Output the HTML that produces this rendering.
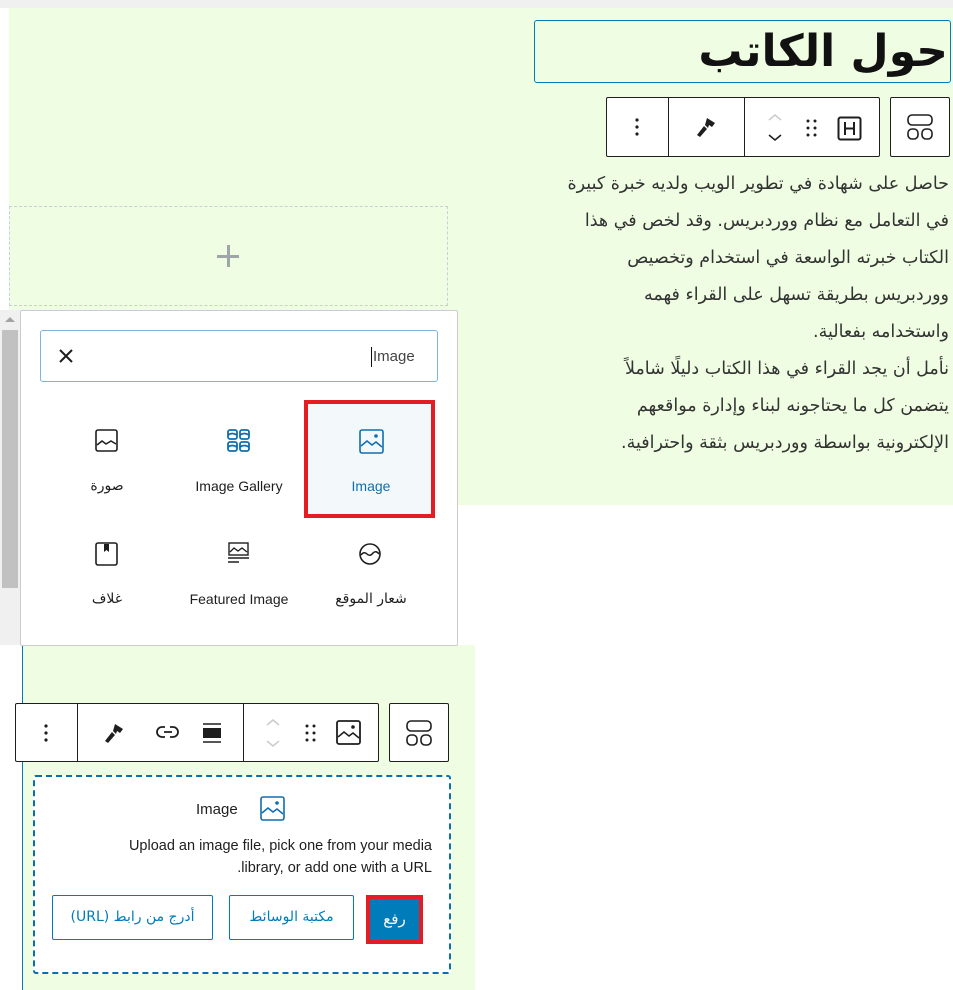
<!DOCTYPE html>
<html><head><meta charset="utf-8"><style>
*{box-sizing:border-box;margin:0;padding:0}
body{width:953px;height:990px;position:relative;background:#fff;font-family:"Liberation Sans","Noto Sans CJK SC",sans-serif;overflow:hidden}
.a{position:absolute}
.g{background:#effde3}
.tb{position:absolute;border:1px solid #1e1e1e;border-radius:2px;background:#fff}
.sep{position:absolute;top:0;bottom:0;width:1px;background:#1e1e1e}
.ar{font-family:"DejaVu Sans","Liberation Sans",sans-serif;direction:rtl}
svg{position:absolute}
.lbl{position:absolute;font-size:14px;color:#1e1e1e;text-align:center;width:130px}
.btn{position:absolute;border:1px solid #007cba;border-radius:2px;color:#007cba;font-size:14px;text-align:center;line-height:42px;background:#fff;direction:rtl;font-family:"DejaVu Sans",sans-serif}
.p div{white-space:nowrap;height:37px}
</style></head><body>
<div class="a" style="left:0;top:0;width:953px;height:8px;background:#f0f0f0"></div>
<div class="a g" style="left:9px;top:8px;width:944px;height:302px"></div>
<div class="a g" style="left:458px;top:300px;width:495px;height:205px"></div>
<div class="a g" style="left:22px;top:645px;width:453px;height:345px"></div>
<div class="a" style="left:22px;top:645px;width:1px;height:345px;background:#007cba"></div>

<div class="a" style="left:534px;top:20px;width:417px;height:63px;border:1px solid #007cba;border-radius:3px"></div>
<div class="a ar" style="left:540px;top:22px;width:408px;height:60px;font-size:44px;font-weight:bold;text-align:right;line-height:60px;color:#111">حول الكاتب</div>

<div class="a ar p" style="left:500px;top:166px;width:449px;font-size:17.5px;line-height:37px;color:#333;text-align:right">
<div>حاصل على شهادة في تطوير الويب ولديه خبرة كبيرة</div>
<div>في التعامل مع نظام ووردبريس. وقد لخص في هذا</div>
<div>الكتاب خبرته الواسعة في استخدام وتخصيص</div>
<div>ووردبريس بطريقة تسهل على القراء فهمه</div>
<div>واستخدامه بفعالية.</div>
<div>نأمل أن يجد القراء في هذا الكتاب دليلًا شاملاً</div>
<div>يتضمن كل ما يحتاجونه لبناء وإدارة مواقعهم</div>
<div>الإلكترونية بواسطة ووردبريس بثقة واحترافية.</div>
</div>

<!-- top toolbar -->
<div class="tb" style="left:606px;top:97px;width:274px;height:60px">
 <div class="sep" style="left:61px"></div><div class="sep" style="left:137px"></div>
 <svg style="left:26px;top:18px" width="8" height="22"><circle cx="4" cy="4" r="1.6" fill="#1e1e1e"/><circle cx="4" cy="11" r="1.6" fill="#1e1e1e"/><circle cx="4" cy="18" r="1.6" fill="#1e1e1e"/></svg>
 <svg style="left:87px;top:17px" width="24" height="24" viewBox="0 0 24 24"><path d="M13 3 L21 8 L18 12 L15 10 L14 13 L11 10 Z M10 11 L13 14 L6 22 L3 20 Z" fill="#1e1e1e"/></svg>
 <svg style="left:158px;top:14px" width="20" height="32"><path d="M4 8 L10 3 L16 8" stroke="#ccc" stroke-width="1.5" fill="none"/><path d="M4 23 L10 28 L16 23" stroke="#1e1e1e" stroke-width="1.5" fill="none"/></svg>
 <svg style="left:198px;top:20px" width="14" height="20"><g fill="#1e1e1e"><circle cx="3" cy="3" r="1.5"/><circle cx="10" cy="3" r="1.5"/><circle cx="3" cy="10" r="1.5"/><circle cx="10" cy="10" r="1.5"/><circle cx="3" cy="17" r="1.5"/><circle cx="10" cy="17" r="1.5"/></g></svg>
 <svg style="left:230px;top:18px" width="26" height="26"><rect x="1.5" y="1.5" width="22" height="22" rx="2" stroke="#1e1e1e" stroke-width="2" fill="none"/><path d="M8 6 V19 M17 6 V19 M8 12.5 H17" stroke="#1e1e1e" stroke-width="2"/></svg>
</div>
<div class="tb" style="left:890px;top:97px;width:60px;height:60px">
 <svg style="left:16px;top:16px" width="28" height="28"><rect x="1" y="1" width="24" height="10" rx="4" stroke="#1e1e1e" stroke-width="1.6" fill="none"/><rect x="1" y="15" width="10" height="10" rx="4" stroke="#1e1e1e" stroke-width="1.6" fill="none"/><rect x="15" y="15" width="10" height="10" rx="4" stroke="#1e1e1e" stroke-width="1.6" fill="none"/></svg>
</div>

<!-- placeholder -->
<div class="a" style="left:9px;top:206px;width:439px;height:100px;border:1px dashed #c8cfd6"></div>
<div class="a" style="left:217px;top:255px;width:22px;height:2.5px;background:#a0a5aa"></div>
<div class="a" style="left:227px;top:245px;width:2.5px;height:22px;background:#a0a5aa"></div>

<!-- scrollbar -->
<div class="a" style="left:0;top:310px;width:20px;height:335px;background:#f0f0f0"></div>
<div class="a" style="left:2px;top:330px;width:16px;height:258px;background:#c1c1c1"></div>
<div class="a" style="left:5px;top:317px;width:0;height:0;border-left:5px solid transparent;border-right:5px solid transparent;border-bottom:5px solid #a3a3a3"></div>

<!-- popup -->
<div class="a" style="left:20px;top:310px;width:438px;height:336px;background:#fff;border:1px solid #ccc;border-radius:2px"></div>
<div class="a" style="left:40px;top:330px;width:398px;height:52px;border:1px solid #7fb3dd;border-radius:3px"></div>
<div class="a" style="left:371px;top:347px;font-size:15px;color:#444;border-left:1px solid #111;padding-left:1px;line-height:20px">Image</div>
<svg style="left:58px;top:348px" width="16" height="16"><path d="M2 2 L14 14 M14 2 L2 14" stroke="#1e1e1e" stroke-width="2"/></svg>

<div class="a" style="left:304px;top:400px;width:131px;height:118px;border:4px solid #e21d24;background:#f3f8fb"></div>
<svg style="left:95px;top:429px" width="24" height="24"><rect x="1" y="1" width="21" height="21" rx="2" stroke="#1e1e1e" stroke-width="1.6" fill="none"/><path d="M2 16 L7 12 L11 15 L16 12 L21 15" stroke="#1e1e1e" stroke-width="1.5" fill="none"/></svg>
<svg style="left:227px;top:429px" width="24" height="24"><g stroke="#0f6fae" stroke-width="1.8" fill="none"><rect x="1" y="1" width="9" height="9" rx="2"/><rect x="13" y="1" width="9" height="9" rx="2"/><rect x="1" y="13" width="9" height="9" rx="2"/><rect x="13" y="13" width="9" height="9" rx="2"/><path d="M1 6 Q5 3 10 6 M13 6 Q17 3 22 6 M1 18 Q5 15 10 18 M13 18 Q17 15 22 18"/></g></svg>
<svg style="left:359px;top:429px" width="26" height="26"><rect x="1" y="1" width="23" height="23" rx="2" stroke="#0f6fae" stroke-width="1.6" fill="none"/><circle cx="17" cy="7" r="1.8" fill="#0f6fae"/><path d="M2 17 L8 12 L13 16 L17 13 L23 18" stroke="#0f6fae" stroke-width="1.5" fill="none"/></svg>
<div class="lbl ar" style="left:42px;top:478px">صورة</div>
<div class="lbl" style="left:174px;top:478px">Image Gallery</div>
<div class="lbl" style="left:306px;top:478px;color:#0f6fae">Image</div>

<svg style="left:95px;top:542px" width="24" height="24"><rect x="1" y="1" width="21" height="22" rx="2" stroke="#1e1e1e" stroke-width="1.6" fill="none"/><path d="M9 2 V10 L11.5 8 L14 10 V2Z" fill="#1e1e1e"/></svg>
<svg style="left:228px;top:542px" width="22" height="24"><rect x="1" y="1" width="19" height="12" stroke="#1e1e1e" stroke-width="1.4" fill="none"/><path d="M2 10 L6 6 L10 9 L14 6 L19 10" stroke="#1e1e1e" stroke-width="1.3" fill="none"/><path d="M0 16 H21 M0 20 H11" stroke="#1e1e1e" stroke-width="1.6"/></svg>
<svg style="left:359px;top:543px" width="24" height="24"><circle cx="11" cy="11" r="10" stroke="#1e1e1e" stroke-width="1.6" fill="none"/><path d="M2 12 Q5 8 8 11 Q11 14 14 10 Q17 7 20 11" stroke="#1e1e1e" stroke-width="1.5" fill="none"/></svg>
<div class="lbl ar" style="left:42px;top:591px">غلاف</div>
<div class="lbl" style="left:174px;top:591px">Featured Image</div>
<div class="lbl ar" style="left:306px;top:591px">شعار الموقع</div>

<!-- bottom toolbar -->
<div class="tb" style="left:15px;top:703px;width:364px;height:59px">
 <div class="sep" style="left:61px"></div><div class="sep" style="left:227px"></div>
 <svg style="left:26px;top:18px" width="8" height="22"><circle cx="4" cy="4" r="1.6" fill="#1e1e1e"/><circle cx="4" cy="11" r="1.6" fill="#1e1e1e"/><circle cx="4" cy="18" r="1.6" fill="#1e1e1e"/></svg>
 <svg style="left:86px;top:17px" width="24" height="24" viewBox="0 0 24 24"><path d="M13 3 L21 8 L18 12 L15 10 L14 13 L11 10 Z M10 11 L13 14 L6 22 L3 20 Z" fill="#1e1e1e"/></svg>
 <svg style="left:140px;top:20px" width="24" height="16"><path d="M9 3 H6 A5 5 0 0 0 6 13 H9 M14 3 H17 A5 5 0 0 1 17 13 H14 M8 8 H16" stroke="#1e1e1e" stroke-width="1.8" fill="none"/></svg>
 <svg style="left:186px;top:18px" width="20" height="22"><path d="M1 2 H19 M1 20 H19" stroke="#1e1e1e" stroke-width="1.6"/><rect x="1" y="6" width="18" height="10" fill="#1e1e1e"/></svg>
 <svg style="left:247px;top:12px" width="20" height="34"><path d="M4 9 L10 4 L16 9" stroke="#ccc" stroke-width="1.5" fill="none"/><path d="M4 25 L10 30 L16 25" stroke="#ccc" stroke-width="1.5" fill="none"/></svg>
 <svg style="left:288px;top:19px" width="14" height="20"><g fill="#1e1e1e"><circle cx="3" cy="3" r="1.5"/><circle cx="10" cy="3" r="1.5"/><circle cx="3" cy="10" r="1.5"/><circle cx="10" cy="10" r="1.5"/><circle cx="3" cy="17" r="1.5"/><circle cx="10" cy="17" r="1.5"/></g></svg>
 <svg style="left:320px;top:16px" width="26" height="26"><rect x="1" y="1" width="23" height="23" rx="2" stroke="#1e1e1e" stroke-width="1.8" fill="none"/><circle cx="17" cy="7" r="1.8" fill="#1e1e1e"/><path d="M2 17 L8 12 L13 16 L17 13 L23 18" stroke="#1e1e1e" stroke-width="1.5" fill="none"/></svg>
</div>
<div class="tb" style="left:389px;top:703px;width:60px;height:59px">
 <svg style="left:16px;top:16px" width="28" height="28"><rect x="1" y="1" width="24" height="10" rx="4" stroke="#1e1e1e" stroke-width="1.6" fill="none"/><rect x="1" y="15" width="10" height="10" rx="4" stroke="#1e1e1e" stroke-width="1.6" fill="none"/><rect x="15" y="15" width="10" height="10" rx="4" stroke="#1e1e1e" stroke-width="1.6" fill="none"/></svg>
</div>

<!-- placeholder block -->
<div class="a" style="left:33px;top:775px;width:418px;height:199px;border:2px dashed #0a6fae;border-radius:3px;background:#fff"></div>
<div class="a" style="left:196px;top:801px;font-size:15px;color:#1e1e1e">Image</div>
<svg style="left:260px;top:796px" width="26" height="26"><rect x="1" y="1" width="23" height="23" rx="2" stroke="#0f6fae" stroke-width="1.6" fill="none"/><circle cx="17" cy="7" r="1.8" fill="#0f6fae"/><path d="M2 17 L8 12 L13 16 L17 13 L23 18" stroke="#0f6fae" stroke-width="1.5" fill="none"/></svg>
<div class="a" style="left:60px;top:835px;width:372px;font-size:14.5px;color:#1e1e1e;text-align:right;line-height:22px">Upload an image file, pick one from your media<br>.library, or add one with a URL</div>
<div class="btn" style="left:52px;top:895px;width:161px;height:45px">أدرج من رابط (URL)</div>
<div class="btn" style="left:229px;top:895px;width:125px;height:45px">مكتبة الوسائط</div>
<div class="a" style="left:366px;top:895px;width:57px;height:49px;border:4px solid #e21d24;background:#007cba;color:#fff;font-size:15px;text-align:center;line-height:41px;font-family:'DejaVu Sans',sans-serif">رفع</div>
</body></html>
